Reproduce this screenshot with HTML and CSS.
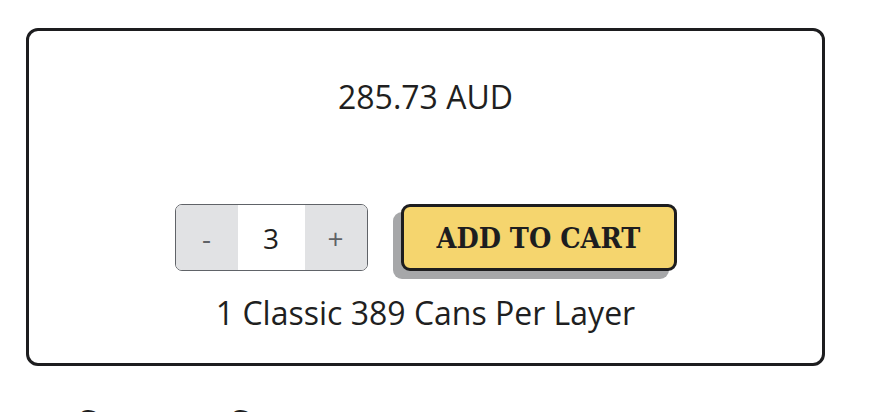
FILE: index.html
```html
<!DOCTYPE html>
<html lang="en">
<head>
  <meta charset="UTF-8" />
  <meta name="viewport" content="width=device-width, initial-scale=1.0" />
  <title>Product</title>
  <link rel="stylesheet" href="styles.css">
</head>
<body>
  <div class="page">
    <div class="card">
      <p class="price">285.73 AUD</p>
      <div class="buy-row">
        <div class="qty">
          <button class="qty-btn">-</button>
          <span class="qty-value">3</span>
          <button class="qty-btn">+</button>
        </div>
        <button class="add-cart">ADD TO CART</button>
      </div>
      <p class="note">1 Classic 389 Cans Per Layer</p>
    </div>
    <h2 class="section-title">Summer Savers</h2>
  </div>
</body>
</html>
```

FILE: styles.css
```css
body {
  margin: 0;
  font-family: "Open Sans", "Noto Sans", sans-serif;
  color: #1f1f21;
  background-color: #ffffff;
  overflow: hidden;
}
.page {
  padding: 28px 0 0 26px;
}
.card {
  box-sizing: border-box;
  width: 799px;
  height: 338px;
  border: 3px solid #1d1d1f;
  border-radius: 12px;
  padding-top: 46px;
  display: flex;
  flex-direction: column;
  align-items: center;
}
.price {
  margin: 0;
  font-size: 32px;
  line-height: 40px;
}
.buy-row {
  display: flex;
  align-items: center;
  gap: 33px;
  margin-top: 87px;
}
.qty {
  box-sizing: border-box;
  display: flex;
  width: 193px;
  height: 67px;
  border: 1.5px solid #606368;
  border-radius: 7px;
  overflow: hidden;
}
.qty-btn {
  width: 62px;
  border: none;
  padding: 0;
  background-color: #e1e2e4;
  color: #5f6266;
  font-family: "Open Sans", sans-serif;
  font-size: 28px;
  cursor: pointer;
}
.qty-value {
  width: 67px;
  display: flex;
  align-items: center;
  justify-content: center;
  font-size: 28px;
  background-color: #ffffff;
}
.add-cart {
  box-sizing: border-box;
  width: 276px;
  height: 67px;
  border: 3px solid #1d1d1f;
  border-radius: 9px;
  background-color: #f5d56e;
  box-shadow: -8px 8px 0 #a6a7a9;
  color: #1d1d1f;
  font-family: "DejaVu Serif Condensed", "DejaVu Serif", serif;
  font-stretch: condensed;
  font-weight: bold;
  font-size: 28.5px;
  padding: 0;
  cursor: pointer;
}
.note {
  margin: 22px 0 0;
  font-size: 32px;
  line-height: 40px;
}
.section-title {
  margin: 35px 0 0 52px;
  font-size: 34px;
  line-height: 40px;
  font-weight: 700;
}
```
